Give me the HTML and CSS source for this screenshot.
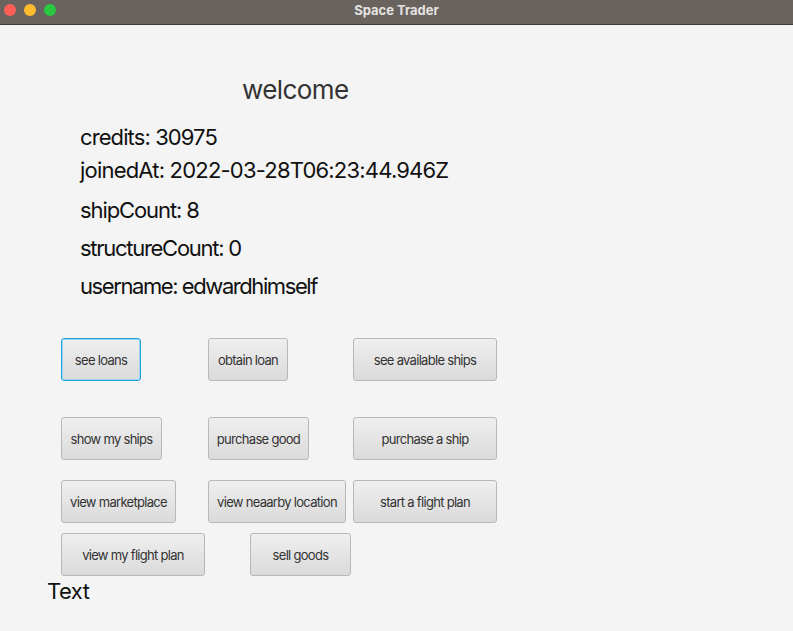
FILE: index.html
```html
<!DOCTYPE html>
<html>
<head>
<meta charset="utf-8">
<link rel="stylesheet" href="styles.css">
</head>
<body>
<div class="window">
  <div class="titlebar">
    <div class="lights">
      <span class="light red"></span>
      <span class="light yellow"></span>
      <span class="light green"></span>
    </div>
    <div class="title">Space Trader</div>
  </div>
  <div class="content">
    <div class="welcome">welcome</div>
    <div class="info">
      <div class="row r-credits">credits: 30975</div>
      <div class="row r-joined">joinedAt: 2022-03-28T06:23:44.946Z</div>
      <div class="row r-ships">shipCount: 8</div>
      <div class="row r-struct">structureCount: 0</div>
      <div class="row r-user">username: edwardhimself</div>
    </div>
    <div class="buttons">
      <div class="btn-row row1">
        <button class="btn focused w80">see loans</button>
        <button class="btn w80">obtain loan</button>
        <button class="btn w144">see available ships</button>
      </div>
      <div class="btn-row row2">
        <button class="btn w101">show my ships</button>
        <button class="btn w101">purchase good</button>
        <button class="btn w144">purchase a ship</button>
      </div>
      <div class="btn-row row3">
        <button class="btn w115">view marketplace</button>
        <button class="btn w138">view neaarby location</button>
        <button class="btn w144">start a flight plan</button>
      </div>
      <div class="btn-row row4">
        <button class="btn w144">view my flight plan</button>
        <button class="btn w101 shift">sell goods</button>
      </div>
    </div>
    <div class="footer-text">Text</div>
  </div>
</div>
</body>
</html>
```
FILE: styles.css
```css
* { box-sizing: border-box; }
html, body { margin: 0; padding: 0; }
body {
  width: 793px;
  height: 631px;
  overflow: hidden;
  background: #f4f4f4;
  font-family: Inter, "Noto Sans", sans-serif;
}
.titlebar {
  position: relative;
  height: 25px;
  background: #69635f;
  border-bottom: 1px solid #3f3b39;
  display: flex;
  align-items: center;
  justify-content: center;
}
.lights {
  position: absolute;
  left: 4px;
  top: 4px;
  display: flex;
  gap: 8px;
}
.light {
  width: 12px;
  height: 12px;
  border-radius: 50%;
  display: block;
}
.red { background: #fd5f57; }
.yellow { background: #febc2e; }
.green { background: #28c840; }
.title {
  color: #e4e2e0;
  font-size: 13px;
  font-weight: 700;
  margin-top: -4px;
}
.welcome {
  padding-left: 242px;
  margin-top: 49px;
  font-size: 26px;
  line-height: 32px;
  letter-spacing: -0.6px;
  color: #333;
}
.info {
  padding-left: 80px;
  color: #111;
  font-size: 22px;
  letter-spacing: -1.1px;
}
.row { line-height: 30px; }
.r-credits { margin-top: 16px; letter-spacing: -0.9px; }
.r-joined { margin-top: 3px; letter-spacing: -0.8px; }
.r-ships { margin-top: 10px; }
.r-struct { margin-top: 8px; letter-spacing: -1.28px; }
.r-user { margin-top: 8px; letter-spacing: -1.42px; }

.buttons {
  margin-top: 37px;
  padding-left: 61px;
}
.btn-row {
  display: grid;
  grid-template-columns: 147px 145px 144px;
  justify-items: start;
}
.row2 { margin-top: 36px; }
.row3 { margin-top: 20px; }
.row4 { margin-top: 10px; }
.btn {
  height: 43px;
  font-family: Inter, "Noto Sans", sans-serif;
  font-size: 13px;
  letter-spacing: -0.7px;
  color: #333;
  background: linear-gradient(#efefef, #dadada);
  border: 1px solid #b8b8b8;
  border-radius: 3px;
  padding: 0;
}
.btn.focused {
  border: 1px solid #1ea4e1;
  box-shadow: inset 0 0 0 1px #9ad6f2;
}
.w80 { width: 80px; }
.w101 { width: 101px; }
.w115 { width: 115px; }
.w138 { width: 138px; }
.w144 { width: 144px; }
.shift { margin-left: 42px; }
.footer-text {
  padding-left: 47px;
  font-size: 22px;
  letter-spacing: -0.5px;
  color: #111;
  line-height: 26px;
  margin-top: 2px;
}
```
